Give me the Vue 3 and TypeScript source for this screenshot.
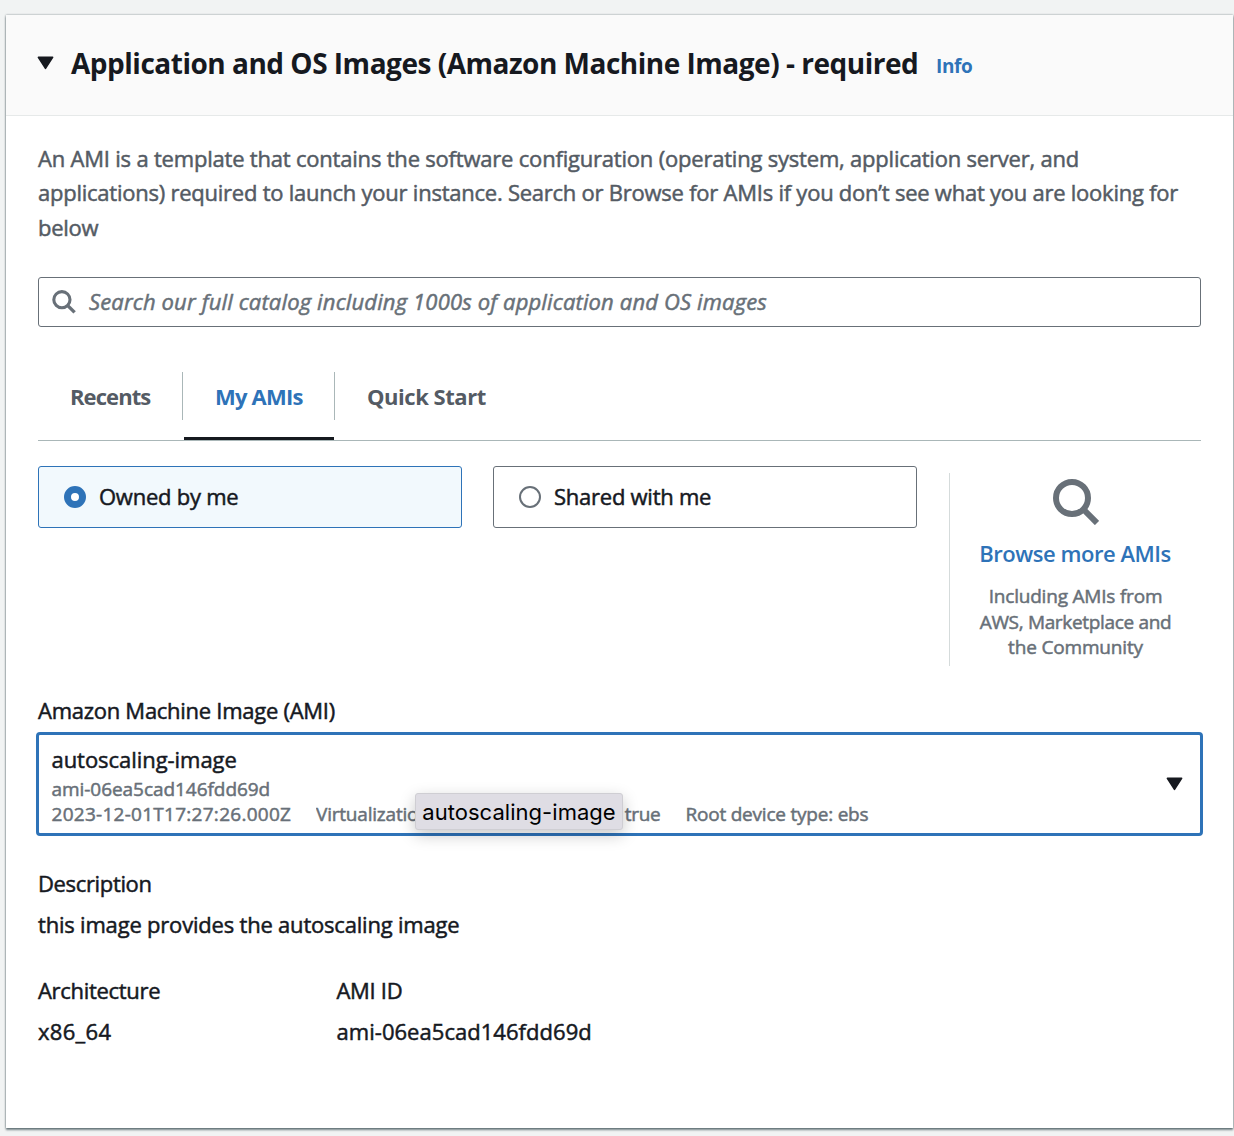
<script setup lang="ts">
import { ref } from 'vue'

interface Tab { id: string; label: string }
interface Source { id: string; label: string }

const tabs: Tab[] = [
  { id: 'recents', label: 'Recents' },
  { id: 'mine', label: 'My AMIs' },
  { id: 'quick', label: 'Quick Start' },
]
const sources: Source[] = [
  { id: 'owned', label: 'Owned by me' },
  { id: 'shared', label: 'Shared with me' },
]
const activeTab = ref('mine')
const activeSource = ref('owned')
</script>

<template>
  <main class="page">
    <section class="card">
      <header class="card-header">
        <svg class="caret" viewBox="0 0 17 14" aria-hidden="true">
          <path d="M1.4 1.3h14.2L8.5 12.4z" fill="#16191f" stroke="#16191f" stroke-width="1.6" stroke-linejoin="round" />
        </svg>
        <h2>Application and OS Images (Amazon Machine Image) - required</h2>
        <a class="info">Info</a>
      </header>

      <div class="card-body">
        <p class="intro">
          <span>An AMI is a template that contains the software configuration (operating system, application server, and</span><br />
          <span>applications) required to launch your instance. Search or Browse for AMIs if you don’t see what you are looking for</span><br />
          <span>below</span>
        </p>

        <div class="search">
          <svg viewBox="0 0 24 24" aria-hidden="true">
            <circle cx="9.9" cy="9.7" r="8.1" fill="none" stroke="#687078" stroke-width="3.1" />
            <path d="M15.5 15.4l7.1 7" stroke="#687078" stroke-width="3.4" />
          </svg>
          <span>Search our full catalog including 1000s of application and OS images</span>
        </div>

        <nav class="tabs">
          <div
            v-for="tab in tabs"
            :key="tab.id"
            class="tab"
            :class="[tab.id, { active: tab.id === activeTab }]"
            @click="activeTab = tab.id"
          >
            <span>{{ tab.label }}</span>
          </div>
        </nav>

        <div class="sources">
          <div
            v-for="source in sources"
            :key="source.id"
            class="tile"
            :class="{ selected: source.id === activeSource }"
            @click="activeSource = source.id"
          >
            <i class="radio"></i>
            <span>{{ source.label }}</span>
          </div>
          <aside class="browse">
            <svg viewBox="0 0 46 46" aria-hidden="true">
              <circle cx="19" cy="19" r="16" fill="none" stroke="#687078" stroke-width="6" />
              <path d="M30.5 30.5l13.5 13.5" stroke="#687078" stroke-width="6" />
            </svg>
            <a>Browse more AMIs</a>
            <p>
              <span class="l1">Including AMIs from</span><br />
              <span class="l2">AWS, Marketplace and</span><br />
              <span class="l3">the Community</span>
            </p>
          </aside>
        </div>

        <div class="label">Amazon Machine Image (AMI)</div>
        <div class="select">
          <div class="option">
            <div class="name">autoscaling-image</div>
            <div class="meta id">ami-06ea5cad146fdd69d</div>
            <div class="meta row">
              <span class="date">2023-12-01T17:27:26.000Z</span>
              <span class="virt">Virtualizatio</span>
              <span class="ena">true</span>
              <span class="root">Root device type: ebs</span>
            </div>
          </div>
          <svg class="caret" viewBox="0 0 17 14" aria-hidden="true">
            <path d="M1.4 1.3h14.2L8.5 12.4z" fill="#16191f" stroke="#16191f" stroke-width="1.6" stroke-linejoin="round" />
          </svg>
          <div class="tooltip">autoscaling-image</div>
        </div>

        <dl class="description">
          <dt>Description</dt>
          <dd>this image provides the autoscaling image</dd>
        </dl>
        <div class="facts">
          <dl class="arch">
            <dt>Architecture</dt>
            <dd class="x86">x86_64</dd>
          </dl>
          <dl>
            <dt class="ami-id">AMI ID</dt>
            <dd class="ami-value">ami-06ea5cad146fdd69d</dd>
          </dl>
        </div>
      </div>
    </section>
  </main>
</template>

<style>
body { background: #f1f3f3; overflow: hidden; }
</style>

<style scoped>
* { box-sizing: border-box; }
.page {
  height: 1136px;
  padding: 15px 1px 8px 6px;
  overflow: hidden;
  color: #16191f;
  font: 400 22px/34px 'Open Sans', 'Noto Sans', sans-serif;
  letter-spacing: -0.25px;
  -webkit-text-stroke: 0.5px currentColor;
  white-space: nowrap;
}
.card {
  height: 1113px;
  background: #fff;
  box-shadow: 0 2px 2px 0 rgba(0, 28, 36, 0.5), 0 0 2px 0 rgba(0, 28, 36, 0.45);
}
.card-header {
  display: flex;
  height: 101px;
  padding: 28px 0 0 31px;
  background: #fafafa;
  border-bottom: 1px solid #e6e9e9;
  -webkit-text-stroke: 0;
}
.caret { display: block; flex: none; width: 17px; height: 14px; }
.card-header .caret { margin-top: 13px; }
h2 {
  width: 847px;
  margin: 0 0 0 17px;
  font-size: 28px;
  line-height: 40px;
  font-weight: 700;
  letter-spacing: -0.49px;
}
.info {
  margin-left: 18px;
  color: #2e73b8;
  font-size: 19px;
  font-weight: 700;
  line-height: 46px;
  letter-spacing: -0.35px;
}
.card-body { padding: 25px 32px 0; }
.intro { margin: 0; color: #545b64; line-height: 34.33px; height: 103px; }
.intro span:nth-of-type(1) { letter-spacing: -0.202px; }
.intro span:nth-of-type(2) { letter-spacing: -0.24px; }

.search {
  display: flex;
  align-items: center;
  gap: 13px;
  height: 50px;
  margin-top: 33px;
  padding-left: 13px;
  border: 1px solid #687078;
  border-radius: 3px;
  color: #687078;
  font-style: italic;
  letter-spacing: 0.149px;
}
.search span, .tile span { padding-bottom: 2px; }
.search svg { width: 24px; height: 24px; }

.tabs {
  display: flex;
  height: 69px;
  margin-top: 45px;
  border-bottom: 1px solid #aab7b8;
  color: #545b64;
  font-weight: 700;
  line-height: 48px;
  -webkit-text-stroke: 0;
}
.tab { position: relative; height: 48px; padding-left: 32px; }
.tab.recents { width: 145px; letter-spacing: -0.92px; border-right: 1px solid #aab7b8; }
.tab.mine { width: 152px; letter-spacing: -0.8px; border-right: 1px solid #aab7b8; }
.tab.quick { letter-spacing: -0.46px; }
.tab.active { color: #2e73b8; }
.tab.active::after {
  position: absolute;
  top: 65px;
  left: 1px;
  width: 150px;
  height: 3px;
  background: #16191f;
  content: '';
}

.sources { display: flex; gap: 31px; margin-top: 25px; }
.tile {
  display: flex;
  align-items: center;
  gap: 13px;
  width: 424px;
  height: 62px;
  padding-left: 25px;
  border: 1px solid #687078;
  border-radius: 3px;
}
.tile.selected { border-color: #2e73b8; background: #f2f9fd; }
.radio { width: 22px; height: 22px; border: 2px solid #687078; border-radius: 50%; background: #fff; }
.tile.selected .radio { border: 7px solid #2e73b8; }
.browse {
  display: flex;
  flex-direction: column;
  align-items: center;
  width: 251px;
  height: 193px;
  margin: 7px 0 0 1px;
  padding-top: 6px;
  border-left: 1px solid #d5dbdb;
}
.browse svg { width: 46px; height: 46px; margin-left: 2px; }
.browse a { margin-top: 11px; color: #2e73b8; font-weight: 600; letter-spacing: -0.46px; -webkit-text-stroke: 0; }
.browse p { margin: 14px 0 0 1px; color: #687078; font-size: 19px; line-height: 25.6px; text-align: center; }
.l1 { letter-spacing: -0.2px; }
.l2 { letter-spacing: -0.33px; }
.l3 { letter-spacing: -0.17px; }

.label { margin-top: 27px; letter-spacing: -0.27px; }
.select {
  position: relative;
  display: flex;
  height: 104px;
  margin: 5px -2px 0;
  padding: 7px 0 0 12.5px;
  border: 3px solid #2e73b8;
  border-radius: 4px;
}
.option { flex: 1; }
.name { letter-spacing: -0.05px; line-height: 34px; }
.meta { color: #687078; font-size: 19px; line-height: 25.5px; }
.meta.id { letter-spacing: -0.05px; padding-top: 0.5px; }
.meta.row { display: flex; margin-top: -0.5px; }
.date { width: 264.5px; letter-spacing: 0.27px; }
.virt { width: 99px; overflow: hidden; letter-spacing: -0.2px; }
.ena { width: 270.5px; padding-right: 25px; display: flex; justify-content: flex-end; }
.root { letter-spacing: -0.22px; }
.select .caret { margin: 35px 17px 0 0; }
.tooltip {
  position: absolute;
  top: 58px;
  left: 376px;
  width: 208px;
  height: 37px;
  border: 1px solid #cfced3;
  border-radius: 3px;
  background: #dfdde4;
  box-shadow: 0 5px 16px rgba(0, 0, 0, 0.22);
  color: #000;
  font: 400 22px/36px Inter, sans-serif;
  letter-spacing: 0.04px;
  text-align: center;
  -webkit-text-stroke: 0;
}

dl, dd { margin: 0; }
dd { margin-top: 7px; }
.description { margin-top: 30px; }
.description dt { letter-spacing: -0.35px; }
.description dd { letter-spacing: -0.2px; }
.facts { display: flex; margin-top: 32px; }
.arch { width: 298.5px; }
.arch dt { letter-spacing: -0.3px; }
.x86 { letter-spacing: 0.3px; }
.ami-id { letter-spacing: -0.3px; }
.ami-value { letter-spacing: 0.04px; }
</style>
